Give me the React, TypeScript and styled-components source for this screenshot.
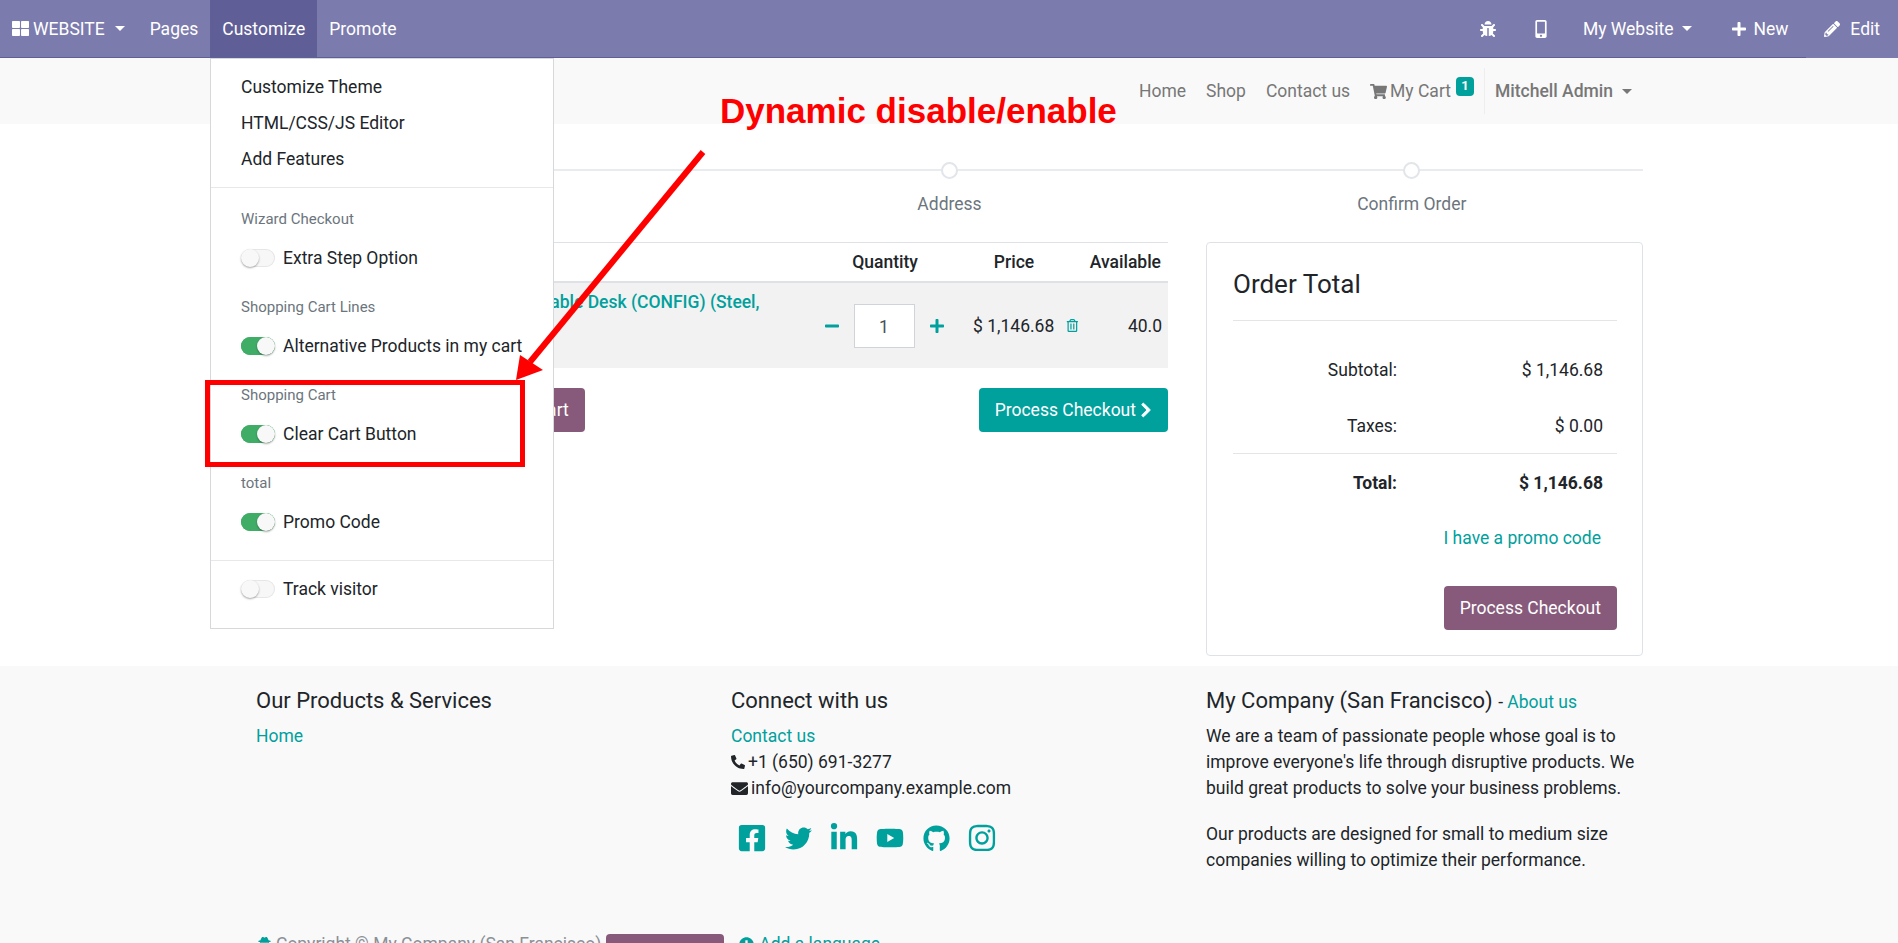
import React from 'react';
import styled, { createGlobalStyle } from 'styled-components';
import {
  FaBug,
  FaChevronRight,
  FaEnvelope,
  FaFacebookSquare,
  FaGithub,
  FaInstagram,
  FaLinkedinIn,
  FaMinus,
  FaMobileAlt,
  FaPencilAlt,
  FaPhoneAlt,
  FaPlus,
  FaPlusCircle,
  FaRegTrashAlt,
  FaShoppingCart,
  FaThLarge,
  FaTwitter,
  FaUserSecret,
  FaYoutube,
} from 'react-icons/fa';

const TEAL = '#00a09d';
const PURPLE = '#875a7b';

const GlobalStyle = createGlobalStyle`
  html, body {
    margin: 0;
    padding: 0;
    background: #fff;
  }
  body {
    font-family: Roboto, "Liberation Sans", sans-serif;
    font-size: 17.5px;
    line-height: 26px;
    color: #212529;
  }
  * {
    box-sizing: border-box;
  }
`;

const Page = styled.div`
  position: relative;
  width: 1898px;
  height: 943px;
  overflow: hidden;
`;

const TopBar = styled.header`
  display: flex;
  align-items: stretch;
  height: 58px;
  background: #7c7bad;
  color: #fff;
  border-bottom: 1px solid #5f5e97;
`;

const TopItem = styled.div<{ $active?: boolean; $edit?: boolean }>`
  display: flex;
  align-items: center;
  gap: ${(p) => (p.$edit ? '10px' : '6px')};
  padding: 0 12px;
  background: ${(p) => (p.$active ? '#5f5e97' : 'transparent')};
  margin-bottom: ${(p) => (p.$edit ? '-1px' : '0')};
`;

const Brand = styled(TopItem)`
  gap: 4px;
  padding-right: 13px;
`;

const RightItem = styled(TopItem)`
  padding: 0 18px;
`;

const SiteSwitcher = styled(RightItem)`
  gap: 8px;
  padding: 0 21px 0 15px;
`;

const EditItem = styled(RightItem)`
  background: #7c7bad;
`;

const Spacer = styled.div`
  flex: 1;
`;

const Caret = styled.span<{ $color?: string; $left?: number }>`
  width: 0;
  height: 0;
  margin-left: ${(p) => p.$left ?? 10}px;
  border-top: 5px solid ${(p) => p.$color ?? '#fff'};
  border-left: 5px solid transparent;
  border-right: 5px solid transparent;
`;

const SubBar = styled.div`
  display: flex;
  align-items: center;
  justify-content: flex-end;
  height: 66px;
  padding-right: 266px;
  background: #f9f9f9;
  color: #777;
`;

const SubLink = styled.span`
  padding: 0 10px;
  display: flex;
  align-items: center;
  gap: 3px;
`;

const CartBadge = styled.span`
  position: relative;
  top: -5px;
  margin-left: -5px;
  width: 18px;
  height: 19px;
  border-radius: 4px;
  background: ${TEAL};
  color: #fff;
  font-size: 13px;
  font-weight: 700;
  line-height: 18px;
  text-align: center;
`;

const UserMenu = styled.div`
  display: flex;
  align-items: center;
  height: 46px;
  margin-left: 10px;
  padding-left: 10px;
  border-left: 1px solid #eee;
  font-weight: 500;
`;

const Main = styled.main`
  height: 542px;
  padding: 0 255px 0 256px;
`;

const Steps = styled.div`
  display: grid;
  grid-template-columns: repeat(3, 1fr);
  height: 118px;
  padding-top: 38px;
`;

const Step = styled.div`
  position: relative;
  text-align: center;
  color: #6c757d;

  &::before {
    content: '';
    position: absolute;
    left: 0;
    right: 0;
    top: 7px;
    height: 2px;
    background: #e9ecef;
  }
`;

const StepDot = styled.span`
  position: relative;
  display: block;
  width: 17px;
  height: 17px;
  margin: 0 auto 12px;
  border: 2px solid #e2e5e9;
  border-radius: 50%;
  background: #fff;
`;

const Columns = styled.div`
  display: grid;
  grid-template-columns: 912px 437px;
  gap: 38px;
`;

const CartHead = styled.div`
  display: grid;
  grid-template-columns: 1fr 128px 130px 89px;
  align-items: center;
  height: 41px;
  border-top: 1px solid #dee2e6;
  border-bottom: 2px solid #dee2e6;
  font-weight: 500;
  text-align: center;
`;

const AvailableHead = styled.span`
  text-align: right;
  padding-right: 7px;
`;

const CartRow = styled.div`
  display: grid;
  grid-template-columns: 1fr 128px 130px 89px;
  align-items: center;
  height: 85px;
  background: #f2f2f2;
`;

const ProductName = styled.a`
  align-self: start;
  padding: 6px 55px 0 220px;
  color: ${TEAL};
  font-weight: 500;
`;

const QtyCell = styled.div`
  display: flex;
  align-items: center;
  justify-content: center;
  gap: 14px;
  padding-right: 2px;
  color: ${TEAL};
`;

const QtyBox = styled.div`
  width: 61px;
  height: 44px;
  border: 1px solid #ced4da;
  background: #fff;
  color: #495057;
  text-align: center;
  line-height: 44px;
`;

const PriceCell = styled.div`
  display: flex;
  align-items: center;
  gap: 12px;
  padding-left: 24px;
  color: ${TEAL};
  white-space: nowrap;
`;

const PriceText = styled.span`
  color: #212529;
`;

const AvailableCell = styled.div`
  text-align: right;
  padding-right: 6px;
`;

const CartActions = styled.div`
  display: flex;
  justify-content: space-between;
  margin-top: 20px;
  padding-left: 219px;
`;

const Button = styled.button<{ $bg: string }>`
  display: inline-flex;
  align-items: center;
  gap: 4px;
  height: 44px;
  padding: 0 16px;
  border: 0;
  border-radius: 4px;
  background: ${(p) => p.$bg};
  color: #fff;
  font: inherit;
`;

const CheckoutButton = styled(Button)`
  gap: 2px;
  padding-right: 14px;
`;

const TotalCard = styled.section`
  height: 414px;
  padding: 22px 25px 26px 26px;
  border: 1px solid #dee2e6;
  border-radius: 4px;
`;

const CardTitle = styled.h4`
  margin: 0;
  padding-bottom: 17px;
  border-bottom: 1px solid #e3e6e9;
  font-size: 26px;
  font-weight: 400;
  line-height: 38px;
  height: 56px;
`;

const TotalGrid = styled.div<{ $top?: number; $strong?: boolean }>`
  display: grid;
  grid-template-columns: 164px 206px;
  align-content: start;
  height: ${(p) => (p.$strong ? 59 : 111)}px;
  margin-top: ${(p) => p.$top ?? 0}px;
  font-weight: ${(p) => (p.$strong ? 700 : 400)};
  line-height: ${(p) => (p.$strong ? 59 : 56)}px;
  text-align: right;
`;

const Rule = styled.div`
  height: 1px;
  background: #e3e6e9;
`;

const PromoLink = styled.a`
  display: block;
  margin-top: 12px;
  padding-right: 16px;
  color: ${TEAL};
  text-align: right;
`;

const CardFoot = styled.div`
  display: flex;
  justify-content: flex-end;
  margin-top: 35px;
`;

const PageFooter = styled.footer`
  height: 277px;
  padding: 20px 255px 0 256px;
  background: #f9f9f9;
`;

const FooterCols = styled.div`
  display: grid;
  grid-template-columns: 475px 475px 437px;
  height: 245px;
`;

const FooterTitle = styled.h5`
  margin: 0 0 7px;
  font-size: 22px;
  font-weight: 400;
  line-height: 30px;
`;

const CompanyTitle = styled(FooterTitle)`
  margin-bottom: 6px;
`;

const TitleNote = styled.span`
  font-size: 17.5px;
`;

const TealLink = styled.a`
  color: ${TEAL};
`;

const ContactLine = styled.div`
  display: flex;
  align-items: center;
  gap: 3px;
`;

const Socials = styled.div`
  display: flex;
  margin: 24px 0 0 -2px;
  color: ${TEAL};
`;

const SocialSlot = styled.span`
  display: flex;
  align-items: center;
  justify-content: center;
  width: 46px;
  height: 26px;
`;

const AboutLine = styled.p`
  margin: 0 0 20px;
`;

const CopyRow = styled.div`
  display: flex;
  align-items: flex-start;
  color: #8a9097;
  gap: 5px;
`;

const CopyIcon = styled.span`
  display: flex;
  margin-right: -2px;
  padding-top: 6px;
  color: ${TEAL};
`;

const LangButton = styled.span`
  display: flex;
  align-items: center;
  width: 118px;
  height: 40px;
  margin-top: 3px;
  padding-left: 8px;
  border-radius: 4px;
  background: ${PURPLE};
  color: #fff;
  font-size: 15px;
`;

const AddLang = styled.a`
  display: flex;
  align-items: center;
  gap: 5px;
  margin-left: 10px;
  color: ${TEAL};
`;

const Menu = styled.div`
  position: absolute;
  left: 210px;
  top: 58px;
  width: 344px;
  height: 571px;
  padding-top: 10px;
  border: 1px solid #d6d8db;
  background: #fff;
`;

const MenuLink = styled.div`
  height: 36px;
  padding-left: 30px;
  line-height: 36px;
`;

const MenuRule = styled.div<{ $gap: number }>`
  height: 1px;
  margin: 10px 0 ${(p) => p.$gap}px;
  background: #e6e8ea;
`;

const MenuRuleFlush = styled(MenuRule)`
  margin-top: -1px;
`;

const MenuSection = styled.div`
  height: 88px;
`;

const MenuHeading = styled.div`
  height: 21px;
  padding-left: 30px;
  color: #6c757d;
  font-size: 15px;
  line-height: 21px;
`;

const ToggleRow = styled.div<{ $top: number }>`
  display: flex;
  align-items: center;
  gap: 8px;
  height: 36px;
  margin-top: ${(p) => p.$top}px;
  padding-left: 30px;
`;

const Toggle = styled.span<{ $on?: boolean }>`
  position: relative;
  width: 34px;
  height: 18px;
  border-radius: 9px;
  background: ${(p) => (p.$on ? '#40ad67' : '#f7f7f7')};
  box-shadow: inset 0 0 0 1px ${(p) => (p.$on ? '#40ad67' : '#e6e6e6')};

  &::after {
    content: '';
    position: absolute;
    top: 0;
    left: ${(p) => (p.$on ? '16px' : '0')};
    width: 18px;
    height: 18px;
    border-radius: 50%;
    background: #f8f8f8;
    box-shadow: 0 1px 2px rgba(0, 0, 0, 0.35);
  }
`;

const Callout = styled.div`
  position: absolute;
  left: 720px;
  top: 90px;
  color: #ff0000;
  font-family: "Liberation Sans", Arial, sans-serif;
  font-size: 35px;
  font-weight: 700;
  line-height: 42px;
  white-space: nowrap;
`;

const HighlightBox = styled.div`
  position: absolute;
  left: 205px;
  top: 380px;
  width: 320px;
  height: 87px;
  border: 5px solid #ff0000;
`;

const ArrowLayer = styled.svg`
  position: absolute;
  left: 0;
  top: 0;
  pointer-events: none;
`;

const sections = [
  { heading: 'Wizard Checkout', label: 'Extra Step Option', on: false },
  { heading: 'Shopping Cart Lines', label: 'Alternative Products in my cart', on: true },
  { heading: 'Shopping Cart', label: 'Clear Cart Button', on: true },
  { heading: 'total', label: 'Promo Code', on: true },
];

const CustomizeMenu: React.FC = () => (
  <Menu>
    <MenuLink>Customize Theme</MenuLink>
    <MenuLink>HTML/CSS/JS Editor</MenuLink>
    <MenuLink>Add Features</MenuLink>
    <MenuRule $gap={21} />
    {sections.map((s) => (
      <MenuSection key={s.label}>
        <MenuHeading>{s.heading}</MenuHeading>
        <ToggleRow $top={10}>
          <Toggle $on={s.on} />
          {s.label}
        </ToggleRow>
      </MenuSection>
    ))}
    <MenuRuleFlush $gap={10} />
    <ToggleRow $top={0}>
      <Toggle />
      Track visitor
    </ToggleRow>
  </Menu>
);

export default function App() {
  return (
    <Page>
      <GlobalStyle />
      <TopBar>
        <Brand>
          <FaThLarge size={17} />
          WEBSITE
          <Caret $left={6} />
        </Brand>
        <TopItem>Pages</TopItem>
        <TopItem $active>Customize</TopItem>
        <TopItem>Promote</TopItem>
        <Spacer />
        <RightItem>
          <FaBug size={16} />
        </RightItem>
        <RightItem>
          <FaMobileAlt size={18} />
        </RightItem>
        <SiteSwitcher>
          My Website
          <Caret $left={1} />
        </SiteSwitcher>
        <RightItem>
          <FaPlus size={16} />
          New
        </RightItem>
        <EditItem $edit>
          <FaPencilAlt size={16} />
          Edit
        </EditItem>
      </TopBar>

      <SubBar>
        <SubLink>Home</SubLink>
        <SubLink>Shop</SubLink>
        <SubLink>Contact us</SubLink>
        <SubLink>
          <FaShoppingCart size={17} />
          My Cart
        </SubLink>
        <CartBadge>1</CartBadge>
        <UserMenu>
          Mitchell Admin
          <Caret $color="#777" $left={9} />
        </UserMenu>
      </SubBar>

      <Main>
        <Steps>
          {['Review Order', 'Address', 'Confirm Order'].map((label) => (
            <Step key={label}>
              <StepDot />
              {label}
            </Step>
          ))}
        </Steps>
        <Columns>
          <div>
            <CartHead>
              <span />
              <span>Quantity</span>
              <span>Price</span>
              <AvailableHead>Available</AvailableHead>
            </CartHead>
            <CartRow>
              <ProductName>Customizable Desk (CONFIG) (Steel, Black)</ProductName>
              <QtyCell>
                <FaMinus size={16} />
                <QtyBox>1</QtyBox>
                <FaPlus size={16} />
              </QtyCell>
              <PriceCell>
                <PriceText>$ 1,146.68</PriceText>
                <FaRegTrashAlt size={13} />
              </PriceCell>
              <AvailableCell>40.0</AvailableCell>
            </CartRow>
            <CartActions>
              <Button $bg={PURPLE}>Clear Cart</Button>
              <CheckoutButton $bg={TEAL}>
                Process Checkout
                <FaChevronRight size={16} strokeWidth={30} />
              </CheckoutButton>
            </CartActions>
          </div>
          <TotalCard>
            <CardTitle>Order Total</CardTitle>
            <TotalGrid $top={21}>
              <span>Subtotal:</span>
              <span>$ 1,146.68</span>
              <span>Taxes:</span>
              <span>$ 0.00</span>
            </TotalGrid>
            <Rule />
            <TotalGrid $strong>
              <span>Total:</span>
              <span>$ 1,146.68</span>
            </TotalGrid>
            <PromoLink>I have a promo code</PromoLink>
            <CardFoot>
              <Button $bg={PURPLE}>Process Checkout</Button>
            </CardFoot>
          </TotalCard>
        </Columns>
      </Main>

      <PageFooter>
        <FooterCols>
          <div>
            <FooterTitle>Our Products &amp; Services</FooterTitle>
            <TealLink>Home</TealLink>
          </div>
          <div>
            <FooterTitle>Connect with us</FooterTitle>
            <TealLink>Contact us</TealLink>
            <ContactLine>
              <FaPhoneAlt size={14} />
              +1 (650) 691-3277
            </ContactLine>
            <ContactLine>
              <FaEnvelope size={17} />
              info@yourcompany.example.com
            </ContactLine>
            <Socials>
              <SocialSlot>
                <FaFacebookSquare size={30} />
              </SocialSlot>
              <SocialSlot>
                <FaTwitter size={27} />
              </SocialSlot>
              <SocialSlot>
                <FaLinkedinIn size={30} />
              </SocialSlot>
              <SocialSlot>
                <FaYoutube size={28} />
              </SocialSlot>
              <SocialSlot>
                <FaGithub size={27} />
              </SocialSlot>
              <SocialSlot>
                <FaInstagram size={30} />
              </SocialSlot>
            </Socials>
          </div>
          <div>
            <CompanyTitle>
              My Company (San Francisco){' '}
              <TitleNote>
                - <TealLink>About us</TealLink>
              </TitleNote>
            </CompanyTitle>
            <AboutLine>
              We are a team of passionate people whose goal is to improve everyone's life through
              disruptive products. We build great products to solve your business problems.
            </AboutLine>
            <AboutLine>
              Our products are designed for small to medium size companies willing to optimize their
              performance.
            </AboutLine>
          </div>
        </FooterCols>
        <CopyRow>
          <CopyIcon>
            <FaUserSecret size={17} />
          </CopyIcon>
          Copyright © My Company (San Francisco)
          <LangButton>English (US)</LangButton>
          <AddLang>
            <FaPlusCircle size={15} />
            Add a language...
          </AddLang>
        </CopyRow>
      </PageFooter>

      <CustomizeMenu />

      <Callout>Dynamic disable/enable</Callout>
      <HighlightBox />
      <ArrowLayer width={1898} height={943} viewBox="0 0 1898 943">
        <line x1={703} y1={152} x2={530} y2={362} stroke="#ff0000" strokeWidth={6} />
        <polygon points="516,380 520,355 543,370" fill="#ff0000" />
      </ArrowLayer>
    </Page>
  );
}
